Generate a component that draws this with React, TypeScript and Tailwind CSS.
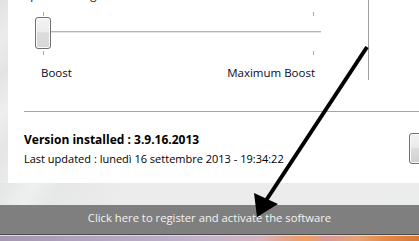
import React from "react";

const font = { fontFamily: '"Open Sans", "Noto Sans", sans-serif' };

export default function App() {
  return (
    <div
      className="relative w-[419px] h-[241px] overflow-hidden flex flex-col bg-[#eaebeb] text-[12px] text-[#111]"
      style={font}
    >
      <div className="flex h-[183px]">
        <div className="w-[8px] h-full bg-[linear-gradient(135deg,#e2e2e2_0%,#ececec_20%,#e4e4e4_40%,#eeeeee_60%,#e5e5e5_80%,#ebebeb_100%)]" />
        <div className="flex-1 h-full bg-white flex flex-col overflow-hidden">
          <div className="h-[111px] flex">
            <div className="w-[360px] flex flex-col">
              <div className="pl-4 -mt-[13px] leading-[15px] h-[15px] text-[11.5px]">Speed setting</div>
              <div className="ml-[27px] w-[286px] mt-[10px] flex flex-col">
                <div className="h-[4px] flex justify-between pl-[8px] pr-[7px]">
                  <div className="w-px h-full bg-[#a8a8a8]" />
                  <div className="w-px h-full bg-[#a8a8a8]" />
                </div>
                <div className="mt-[1px] h-[32px] flex">
                  <div className="w-[16px] h-[32px] rounded-[3px] border border-[#707070] bg-[linear-gradient(180deg,#f4f4f4_0%,#ececec_45%,#dcdcdc_50%,#d8d8d8_100%)] shadow-[inset_0_0_0_1px_#fafafa]" />
                  <div className="flex-1 mt-[14px] h-[2px] border-t border-[#b4b4b4] bg-[#e4e4e4]" />
                </div>
                <div className="mt-[2px] h-[4px] flex justify-between pl-[8px] pr-[7px]">
                  <div className="w-px h-full bg-[#a8a8a8]" />
                  <div className="w-px h-full bg-[#a8a8a8]" />
                </div>
                <div className="mt-[10px] flex justify-between px-[6px] leading-[15px] text-[11.5px] text-[#0a0a1e]">
                  <span>Boost</span>
                  <span>Maximum Boost</span>
                </div>
              </div>
            </div>
            <div className="w-px h-[80px] bg-[#a0a0a0]" />
          </div>
          <div className="ml-4 h-px bg-[#a5a5a5]" />
          <div className="flex mt-[18px]">
            <div className="w-[401px] shrink-0 pl-4 leading-[19px] text-black">
              <div className="font-bold">Version installed : 3.9.16.2013</div>
              <div className="text-[11px]">Last updated : lunedì 16 settembre 2013 - 19:34:22</div>
            </div>
            <div className="mt-[3px] w-[40px] h-[31px] shrink-0 rounded-[3px] border border-[#707070] bg-[linear-gradient(180deg,#f2f2f2_0%,#ebebeb_45%,#dddddd_50%,#cfcfcf_100%)] shadow-[inset_0_0_0_1px_#fbfbfb]" />
          </div>
        </div>
      </div>
      <div className="h-[22px] bg-[linear-gradient(120deg,#e4e5e5_0%,#eeefef_8%,#e6e7e7_14%,#ebeceb_30%,#ebedec_100%)]" />
      <div className="h-[29px] bg-[#7f7f7f] text-center text-[#f4f4f4] leading-[25px] text-[11.25px]">
        Click here to register and activate the software
      </div>
      <div className="h-px bg-[#4e4e4e]" />
      <div className="h-px bg-[#ddd6e4]" />
      <div className="h-[5px] bg-[linear-gradient(90deg,#a597b2_0%,#b4a6c2_25%,#c4b4cc_50%,#d8b4c0_62%,#e8a07a_70%,#f0a060_73%,#d89898_78%,#e8a478_85%,#e38848_92%,#da7838_100%)]" />
      <svg
        className="absolute inset-0 pointer-events-none"
        width="419"
        height="241"
        viewBox="0 0 419 241"
      >
        <line x1="367" y1="47" x2="265" y2="202" stroke="#000" strokeWidth="4" />
        <polygon points="254,193 278,204 257,217" fill="#000" />
      </svg>
    </div>
  );
}
